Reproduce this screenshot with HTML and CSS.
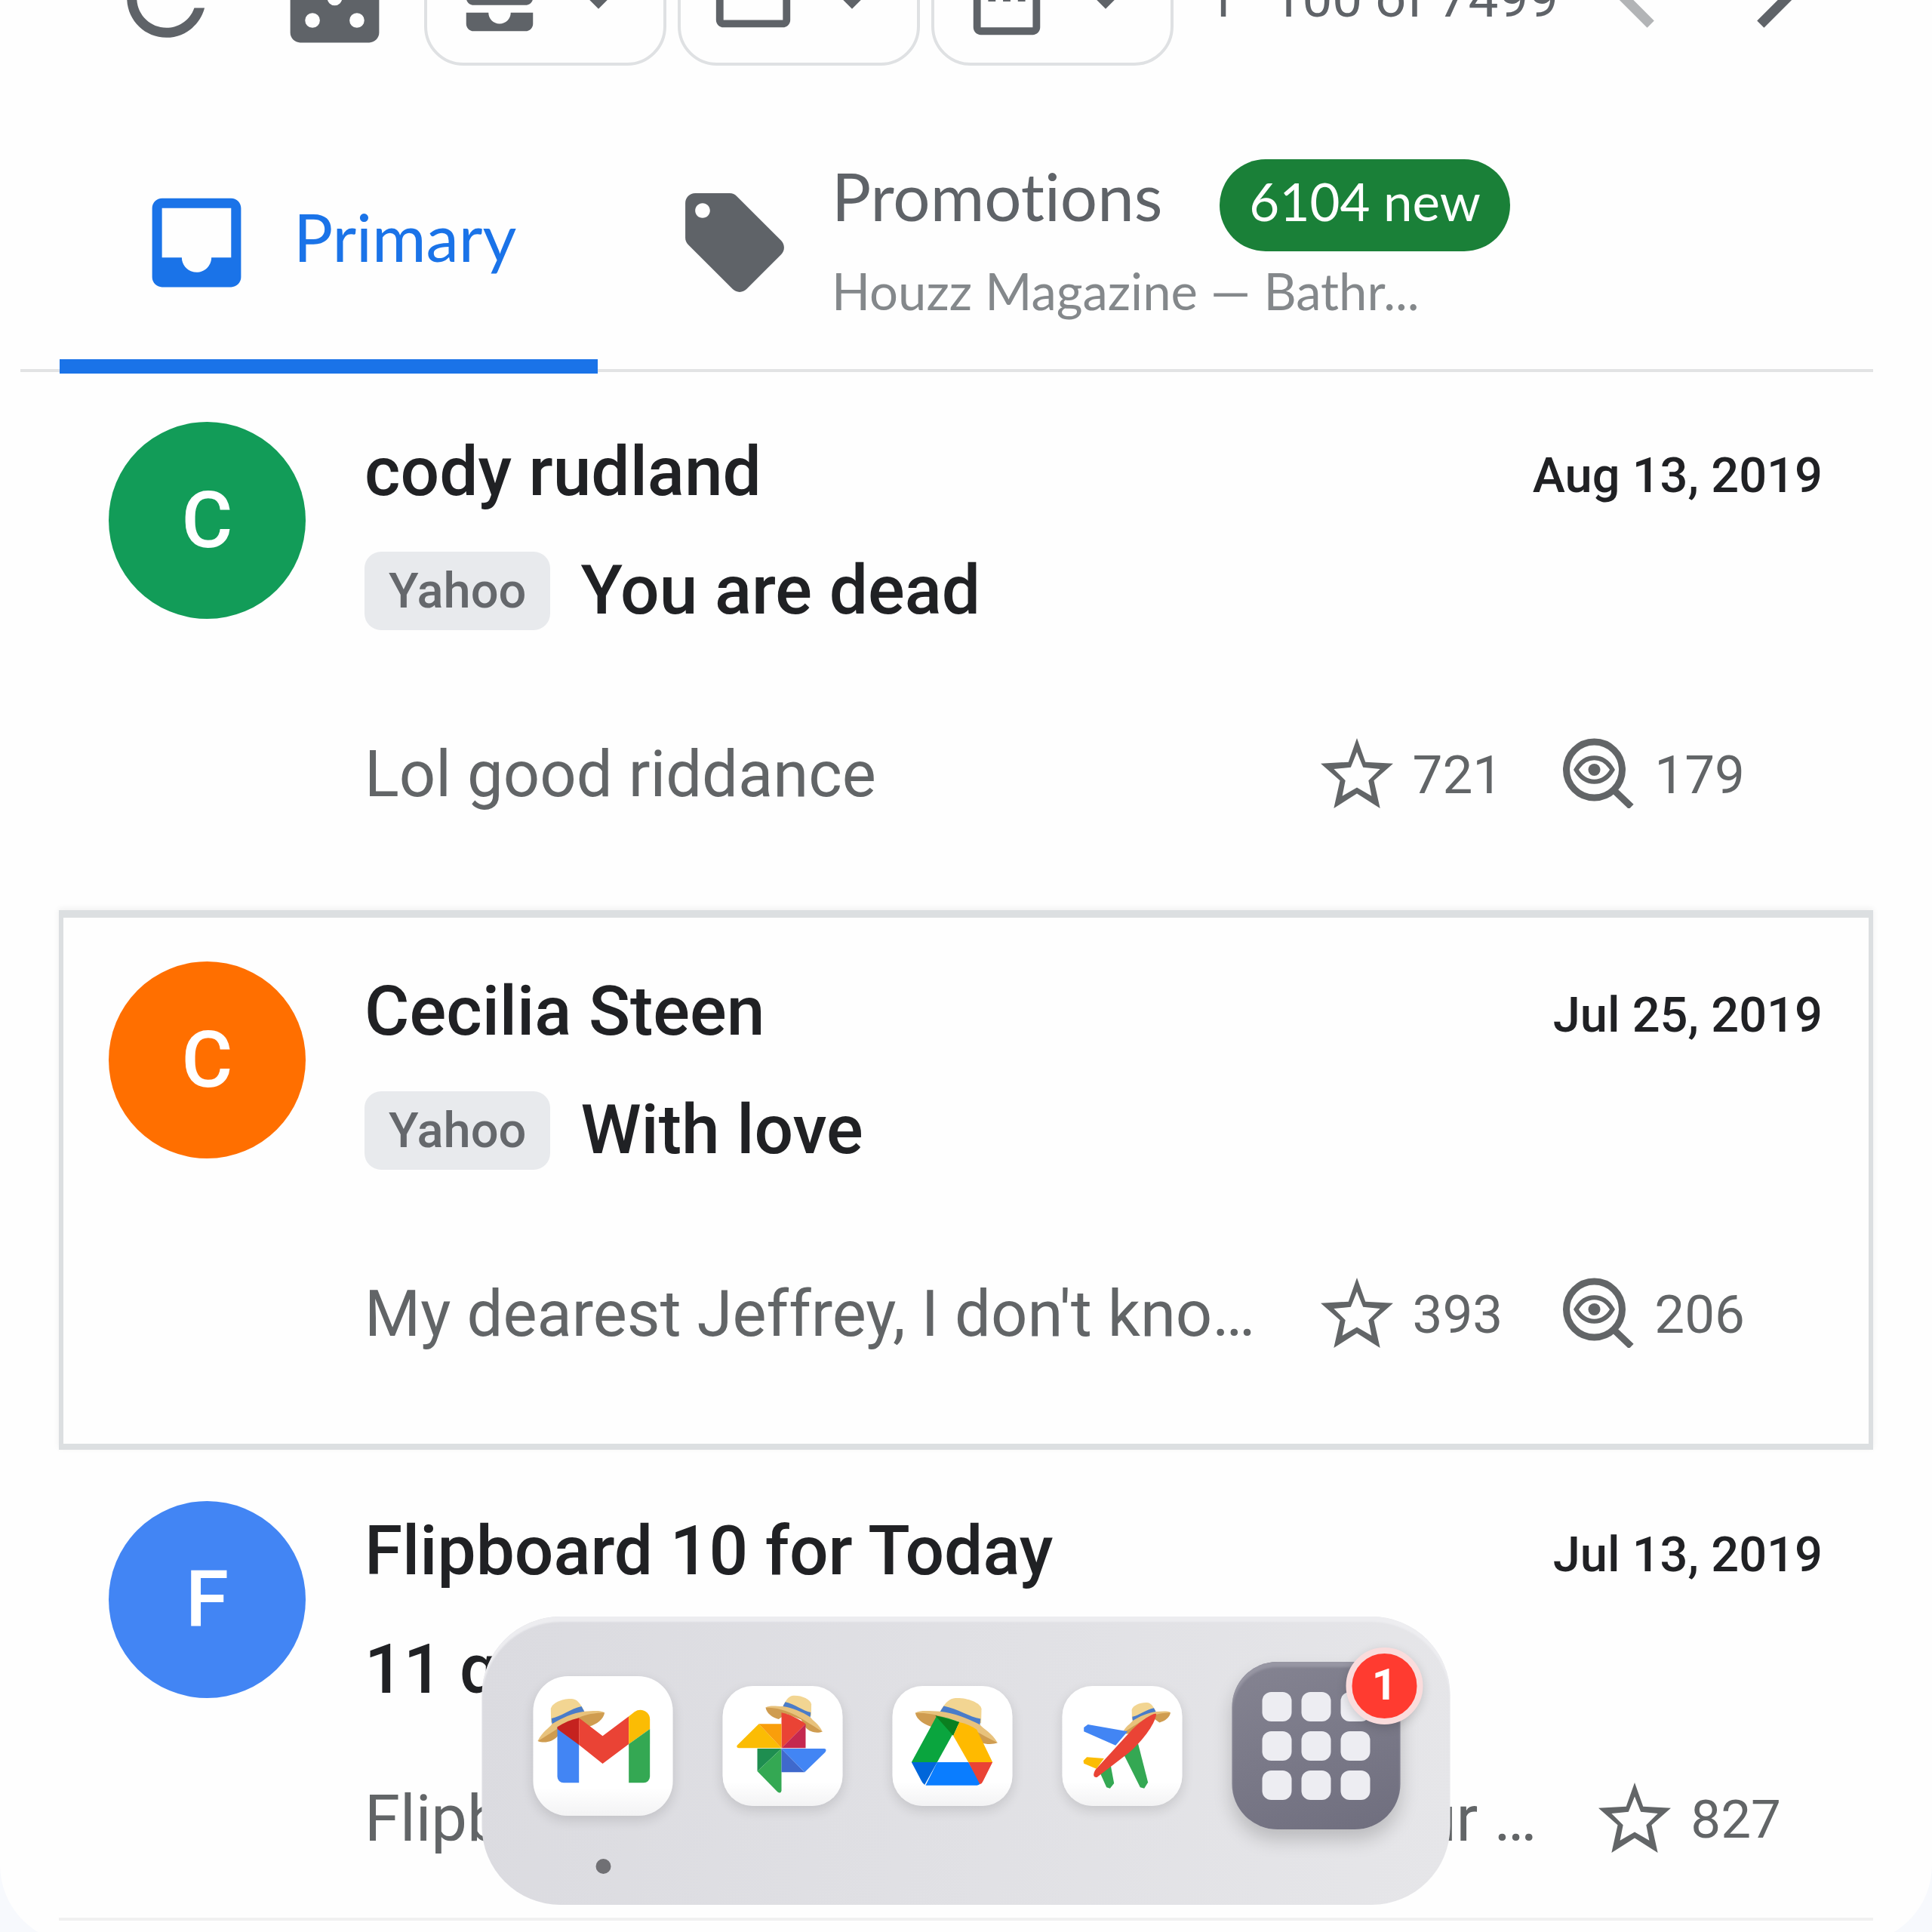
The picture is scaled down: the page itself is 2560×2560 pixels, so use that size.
FILE: index.html
```html
<!DOCTYPE html>
<html lang="en">
<head>
    <meta charset="UTF-8">
    <meta name="viewport" content="width=device-width, initial-scale=1.0">
    <title>Inbox</title>
    <link rel="stylesheet" href="styles.css">
</head>
<body>
    <!-- shared drawings -->
    <svg class="defs" aria-hidden="true">
        <symbol id="caret" viewBox="0 0 24 24"><path d="M7 10l5 5 5-5z"/></symbol>
        <symbol id="star" viewBox="0 0 94 91">
            <path fill-rule="evenodd" d="M47 0L58 31L94 33L69 55L77 91L47 72L17 91L25 55L0 33L36 31zM47 18L39 38L17 40L32 55L28 75L47 64L66 75L62 55L77 40L55 38z"/>
        </symbol>
        <symbol id="opens" viewBox="0 0 95 93">
            <circle cx="42" cy="42" r="37" fill="none" stroke="currentColor" stroke-width="9"/>
            <path d="M68 69L91 91" stroke="currentColor" stroke-width="9"/>
            <path d="M18 42C30 21 54 21 66 42C54 63 30 63 18 42z" fill="none" stroke="currentColor" stroke-width="6"/>
            <circle cx="42" cy="42" r="8"/>
        </symbol>
        <symbol id="hat" viewBox="100 148 268 180" overflow="visible">
            <path fill="#cf9c50" d="M100 318C125 328 158 322 178 300L200 262L270 235L305 260C335 252 362 232 366 205C310 195 180 240 100 318z"/>
            <path fill="#f2d592" d="M153 245L152 190C156 166 200 148 236 150C256 152 266 164 284 196z"/>
            <path fill="#4a7cc9" d="M155 228C190 222 230 190 274 180L286 202C240 214 200 232 157 252z"/>
            <path fill="#e8c27c" d="M100 318C118 280 145 268 157 250C195 226 240 206 286 200C315 200 345 193 366 205C330 206 290 212 262 226C210 244 150 290 100 318z"/>
        </symbol>
    </svg>

    <main class="panel">
        <div class="toolbar">
            <button class="icon-btn" aria-label="Refresh">
                <svg viewBox="0 0 24 24"><path d="M17.65 6.35C16.2 4.9 14.21 4 12 4c-4.42 0-7.99 3.58-7.99 8s3.57 8 7.99 8c3.73 0 6.84-2.55 7.73-6h-2.08c-.82 2.33-3.04 4-5.65 4-3.31 0-6-2.69-6-6s2.69-6 6-6c1.66 0 3.14.69 4.22 1.78L13 11h7V4l-2.35 2.35z"/></svg>
            </button>
            <button class="icon-btn dice" aria-label="Random">
                <svg viewBox="0 0 24 24"><path fill-rule="evenodd" d="M19 3H5c-1.1 0-2 .9-2 2v14c0 1.1.9 2 2 2h14c1.1 0 2-.9 2-2V5c0-1.1-.9-2-2-2zM7.5 18a1.5 1.5 0 1 1 0-3 1.5 1.5 0 0 1 0 3zm0-9a1.5 1.5 0 1 1 0-3 1.5 1.5 0 0 1 0 3zm4.5 4.5a1.5 1.5 0 1 1 0-3 1.5 1.5 0 0 1 0 3zm4.5 4.5a1.5 1.5 0 1 1 0-3 1.5 1.5 0 0 1 0 3zm0-9a1.5 1.5 0 1 1 0-3 1.5 1.5 0 0 1 0 3z"/></svg>
            </button>
            <div class="menus">
                <button class="menu-btn" aria-label="Inboxes">
                    <svg viewBox="0 0 24 24"><path d="M19 3H5c-1.1 0-2 .9-2 2v7c0 1.1.9 2 2 2h14c1.1 0 2-.9 2-2V5c0-1.1-.9-2-2-2zm0 6h-4c0 1.62-1.38 3-3 3s-3-1.38-3-3H5V5h14v4zm-4 7h6v3c0 1.1-.9 2-2 2H5c-1.1 0-2-.9-2-2v-3h6c0 1.66 1.34 3 3 3s3-1.34 3-3z"/></svg>
                    <svg><use href="#caret"/></svg>
                </button>
                <button class="menu-btn" aria-label="Folders">
                    <svg viewBox="0 0 24 24"><path d="M9.17 6l2 2H20v10H4V6h5.17M10 4H4c-1.1 0-1.99.9-1.99 2L2 18c0 1.1.9 2 2 2h16c1.1 0 2-.9 2-2V8c0-1.1-.9-2-2-2h-8l-2-2z"/></svg>
                    <svg><use href="#caret"/></svg>
                </button>
                <button class="menu-btn" aria-label="Dates">
                    <svg viewBox="0 0 24 24"><path d="M9 11H7v2h2v-2zm4 0h-2v2h2v-2zm4 0h-2v2h2v-2zm2-7h-1V2h-2v2H8V2H6v2H5c-1.11 0-1.99.9-1.99 2L3 20c0 1.1.89 2 2 2h14c1.1 0 2-.9 2-2V6c0-1.1-.9-2-2-2zm0 16H5V9h14v11z"/></svg>
                    <svg><use href="#caret"/></svg>
                </button>
            </div>
            <span class="range">1–100 of 7499</span>
            <div class="pager">
                <button class="icon-btn" aria-label="Newer" disabled>
                    <svg viewBox="0 0 24 24"><path d="M15.41 7.41L14 6l-6 6 6 6 1.41-1.41L10.83 12z"/></svg>
                </button>
                <button class="icon-btn" aria-label="Older">
                    <svg viewBox="0 0 24 24"><path d="M10 6L8.59 7.41 13.17 12l-4.58 4.59L10 18l6-6z"/></svg>
                </button>
            </div>
        </div>

        <nav class="tabs">
            <button class="tab active">
                <svg viewBox="0 0 24 24"><path d="M19 3H5c-1.1 0-2 .9-2 2v14c0 1.1.9 2 2 2h14c1.1 0 2-.9 2-2V5c0-1.1-.9-2-2-2zm0 12h-4c0 1.66-1.35 3-3 3s-3-1.34-3-3H4.99V5H19v10z"/></svg>
                <span class="tab-name">Primary</span>
            </button>
            <button class="tab">
                <svg viewBox="0 0 24 24"><path d="M21.41 11.58l-9-9C12.05 2.22 11.55 2 11 2H4c-1.1 0-2 .9-2 2v7c0 .55.22 1.05.59 1.42l9 9c.36.36.86.58 1.41.58s1.05-.22 1.41-.59l7-7c.37-.36.59-.86.59-1.41s-.23-1.06-.59-1.42zM5.5 7C4.67 7 4 6.33 4 5.5S4.67 4 5.5 4 7 4.67 7 5.5 6.33 7 5.5 7z"/></svg>
                <span class="tab-text">
                    <span class="tab-head">
                        <span>Promotions</span>
                        <span class="new">6104 new</span>
                    </span>
                    <span class="tab-sub">Houzz Magazine — Bathr...</span>
                </span>
            </button>
        </nav>

        <div class="list">
            <article class="mail">
                <div class="avatar green">C</div>
                <div class="body">
                    <div class="line">
                        <h2>cody rudland</h2>
                        <time>Aug 13, 2019</time>
                    </div>
                    <div class="line subject">
                        <span class="chip">Yahoo</span>
                        <h3>You are dead</h3>
                    </div>
                    <div class="line preview">
                        <p>Lol good riddance</p>
                        <div class="stats">
                            <span class="stat"><svg><use href="#star"/></svg>721</span>
                            <span class="stat"><svg><use href="#opens"/></svg>179</span>
                        </div>
                    </div>
                </div>
            </article>

            <article class="mail hover">
                <div class="avatar orange">C</div>
                <div class="body">
                    <div class="line">
                        <h2>Cecilia Steen</h2>
                        <time>Jul 25, 2019</time>
                    </div>
                    <div class="line subject">
                        <span class="chip">Yahoo</span>
                        <h3>With love</h3>
                    </div>
                    <div class="line preview">
                        <p>My dearest Jeffrey, I don't kno…</p>
                        <div class="stats">
                            <span class="stat"><svg><use href="#star"/></svg>393</span>
                            <span class="stat"><svg><use href="#opens"/></svg>206</span>
                        </div>
                    </div>
                </div>
            </article>

            <article class="mail short">
                <div class="avatar blue">F</div>
                <div class="body">
                    <div class="line">
                        <h2>Flipboard 10 for Today</h2>
                        <time>Jul 13, 2019</time>
                    </div>
                    <div class="line subject">
                        <h3>11 q</h3>
                    </div>
                    <div class="line preview">
                        <p class="wide"><span>Flipb</span><span>ur …</span></p>
                        <div class="stats">
                            <span class="stat"><svg><use href="#star"/></svg>827</span>
                        </div>
                    </div>
                </div>
            </article>
        </div>
    </main>

    <div class="dock">
        <button class="app current" aria-label="Gmail">
            <svg viewBox="82 60 555 555">
                <use href="#hat" x="100" y="148" width="268" height="180"/>
                <path fill="#4285f4" d="M178 262L264 325V484H203a25 25 0 0 1-25-25z"/>
                <path fill="#c5221f" d="M178 262C205 245 235 232 264 226V333L178 270z"/>
                <path fill="#ea4335" d="M264 226L358 298L462 220V330L358 408L264 333z"/>
                <path fill="#fbbc04" d="M462 220L485 202C510 184 546 200 546 232V270L462 330z"/>
                <path fill="#34a853" d="M462 330L546 270V459a25 25 0 0 1-25 25H462z"/>
            </svg>
        </button>
        <button class="app" aria-label="Photos">
            <svg viewBox="834 99 477 477">
                <g transform="translate(1316 10) scale(-.85 .85)"><use href="#hat" x="100" y="148" width="268" height="180"/></g>
                <path fill="#ea4335" d="M1068 205C1100 212 1135 228 1164 250L1068 346z"/>
                <path fill="#c5284f" d="M1164 250V346H1068z"/>
                <path fill="#fbbc04" d="M978 250L1068 346H898Q886 344 893 334z"/>
                <path fill="#f99e0b" d="M978 250H1068V346z"/>
                <path fill="#1e8e50" d="M972 348H1068L972 438z"/>
                <path fill="#34a853" d="M1068 348L972 438L1052 520Q1066 530 1068 514z"/>
                <path fill="#3f69cc" d="M1068 348V442H1160z"/>
                <path fill="#4285f4" d="M1068 348H1238Q1250 350 1242 362L1160 442z"/>
            </svg>
        </button>
        <button class="app" aria-label="Drive">
            <svg viewBox="130 99 477 477">
                <g transform="translate(671 -12) scale(-1.23 1.06)"><use href="#hat" x="100" y="148" width="268" height="180"/></g>
                <path fill="#0aa53e" d="M306 218C335 222 368 230 396 243L308 402H206z"/>
                <path fill="#0b7f20" d="M300 216L396 243L372 297z"/>
                <path fill="#ffba00" d="M396 243C420 248 445 258 465 272L528 402H432L372 297z"/>
                <path fill="#0a7dff" d="M308 402H432L480 484Q476 494 466 494H262z"/>
                <path fill="#0066da" d="M206 402H308L258 492Q248 484 244 474z"/>
                <path fill="#ea4335" d="M432 402H528L490 478Q486 488 478 490z"/>
            </svg>
        </button>
        <button class="app" aria-label="Travel">
            <svg viewBox="806 99 477 477">
                <g transform="translate(973 57) scale(.72)"><use href="#hat" x="100" y="148" width="268" height="180"/></g>
                <path fill="#4285f4" d="M892 264L908 252L1066 280L1018 335L892 280z"/>
                <path fill="#fbbc04" d="M890 396L904 382L972 387L942 428L892 407z"/>
                <path fill="#34a853" d="M1104 314L1147 482L1132 506L1116 502L1050 370z"/>
                <path fill="#34a853" d="M998 410L1012 486L996 506L982 502L958 448z"/>
                <path fill="#ea4335" d="M1180 210C1176 252 1118 326 1064 370L944 462C928 464 928 448 938 432L1084 272C1128 230 1168 206 1180 210z"/>
            </svg>
        </button>
        <button class="launcher" aria-label="All apps">
            <span></span><span></span><span></span>
            <span></span><span></span><span></span>
            <span></span><span></span><span></span>
            <b class="badge">1</b>
        </button>
    </div>
</body>
</html>
```

FILE: styles.css
```css
* {
    box-sizing: border-box;
}

body {
    margin: 0;
    height: 100vh;
    overflow: hidden;
    background: #f7f9fd;
    font-family: Roboto, sans-serif;
    color: #202124;
}

button {
    margin: 0;
    padding: 0;
    border: none;
    background: none;
    font: inherit;
    color: #5f6368;
    text-align: left;
    cursor: pointer;
}

h2, h3, p {
    margin: 0;
}

svg {
    display: block;
    flex: none;
    fill: currentColor;
}

.defs {
    position: absolute;
    width: 0;
    height: 0;
}

.panel {
    background: #fefefe;
    border-radius: 0 0 104px 104px;
    padding-bottom: 30px;
    overflow: hidden;
}

/* toolbar, scrolled half out of view */
.toolbar {
    display: flex;
    align-items: center;
    height: 180px;
    margin-top: -93px;
    padding: 0 131px 0 142px;
    color: #5f6368;
}

.icon-btn svg {
    width: 157px;
    height: 157px;
}

.icon-btn:disabled {
    color: #b2b4b6;
}

.dice {
    margin-left: 66px;
}

.menus {
    display: flex;
    gap: 15px;
    margin-left: 40px;
}

.menu-btn {
    display: flex;
    align-items: center;
    gap: 13px;
    height: 180px;
    padding: 0 27px 0 37px;
    border: 4px solid #dfe1e3;
    border-radius: 52px;
}

.menu-btn svg {
    width: 118px;
    height: 118px;
}

.range {
    margin-left: 44px;
    font-size: 71px;
    white-space: nowrap;
}

.pager {
    display: flex;
    gap: 24px;
    margin-left: auto;
}

/* category tabs */
.tabs {
    display: flex;
    height: 340px;
    margin: 66px 78px -2px 27px;
    padding-left: 52px;
    border-bottom: 4px solid #e2e3e4;
}

.tab {
    position: relative;
    display: flex;
    align-items: center;
    gap: 50px;
    padding-left: 103px;
    font-family: Lato, sans-serif;
    font-size: 87px;
    font-variant-ligatures: none;
}

.tab svg {
    width: 157px;
    height: 157px;
}

.tab.active {
    width: 713px;
    color: #1a73e8;
}

.tab.active::after {
    content: "";
    position: absolute;
    left: 0;
    right: 0;
    bottom: -6px;
    height: 19px;
    background: #1a73e8;
}

.tab-name {
    padding-bottom: 16px;
}

.tab-text {
    align-self: flex-start;
    padding-top: 51px;
}

.tab-head {
    display: flex;
    align-items: baseline;
    gap: 76px;
    line-height: 112px;
}

.new {
    padding: 0 39px 10px;
    border-radius: 61px;
    background: #1a8038;
    color: #fff;
    font-size: 69px;
}

.tab-sub {
    display: block;
    font-size: 67px;
    line-height: 104px;
    color: #84888b;
}

/* messages */
.list {
    margin: 0 78px;
    border-bottom: 4px solid #f1f1f1;
}

.mail {
    display: flex;
    gap: 78px;
    padding: 56px 67px 101px 66px;
}

.mail.hover {
    box-shadow: inset 6px 0 #dcdfe1, inset -6px 0 #dcdfe1, inset 0 10px #dcdfe1, inset 0 -8px #dcdfe1, 0 -2px 8px #f0f0f0;
}

.mail.short {
    padding-bottom: 52px;
}

.avatar {
    flex: none;
    width: 261px;
    height: 261px;
    margin-top: 12px;
    border-radius: 50%;
    color: #fff;
    font-size: 104px;
    font-weight: 500;
    line-height: 261px;
    text-align: center;
}

.green { background: #129c58; }
.orange { background: #ff6f00; }
.blue { background: #4285f4; }

.body {
    flex: 1;
    min-width: 0;
}

.line {
    display: flex;
    align-items: center;
    justify-content: space-between;
    height: 157px;
    line-height: 157px;
    white-space: nowrap;
}

h2, h3 {
    font-size: 91px;
    font-weight: 500;
}

time {
    padding-top: 10px;
    font-size: 65px;
    font-weight: 500;
}

.line.subject {
    justify-content: flex-start;
    gap: 40px;
}

.chip {
    padding: 0 32px;
    border-radius: 22px;
    background: #e8eaed;
    color: #65686c;
    font-size: 65px;
    font-weight: 500;
    line-height: 104px;
}

.preview {
    margin-top: 87px;
    color: #626567;
    font-size: 85px;
}

.short .preview {
    margin-top: 41px;
}

.wide {
    display: flex;
    flex: 1;
    justify-content: space-between;
    padding-right: 82px;
}

.stats {
    display: flex;
    gap: 79px;
    margin-right: 103px;
    font-size: 71px;
}

.short .stats {
    margin-right: 55px;
}

.stat {
    display: flex;
    align-items: center;
    gap: 26px;
}

.stat svg {
    width: 96px;
    height: 93px;
    margin-bottom: 4px;
}

/* dock floating over the page */
.dock {
    position: fixed;
    left: 50%;
    bottom: 36px;
    transform: translateX(-50%);
    display: flex;
    align-items: center;
    gap: 66px;
    padding: 60px 66px 100px 68px;
    border-radius: 104px;
    background: linear-gradient(100deg, #dbdbe0, #e6e6e9);
    box-shadow: inset 0 7px 2px #ededf0;
}

.app {
    position: relative;
    width: 159px;
    height: 159px;
    border-radius: 40px;
    background: linear-gradient(#fff 80%, #f3f3f4);
    box-shadow: 0 6px 16px rgba(0, 0, 0, .12);
}

.app svg {
    width: 100%;
    height: 100%;
}

.app.current {
    width: 185px;
    height: 185px;
    border-radius: 46px;
}

.current::after {
    content: "";
    position: absolute;
    left: 50%;
    bottom: -77px;
    width: 20px;
    height: 20px;
    margin-left: -10px;
    border-radius: 50%;
    background: #707074;
}

.launcher {
    position: relative;
    display: grid;
    grid-template-columns: repeat(3, 39px);
    gap: 13px;
    place-content: center;
    width: 223px;
    height: 222px;
    border-radius: 60px;
    background: linear-gradient(160deg, #858492, #6f6e7e);
    box-shadow: inset 0 7px 3px #9796a3, 0 14px 24px rgba(0, 0, 0, .18);
}

.launcher span {
    height: 39px;
    border-radius: 12px;
    background: #ededf2;
}

.badge {
    position: absolute;
    top: -19px;
    right: -30px;
    width: 102px;
    height: 102px;
    border: 8px solid #fadcdc;
    border-radius: 50%;
    background: #ff3b30;
    box-shadow: 0 4px 14px rgba(0, 0, 0, .16);
    color: #fff;
    font-size: 58px;
    font-weight: 700;
    line-height: 82px;
    text-align: center;
}
```
